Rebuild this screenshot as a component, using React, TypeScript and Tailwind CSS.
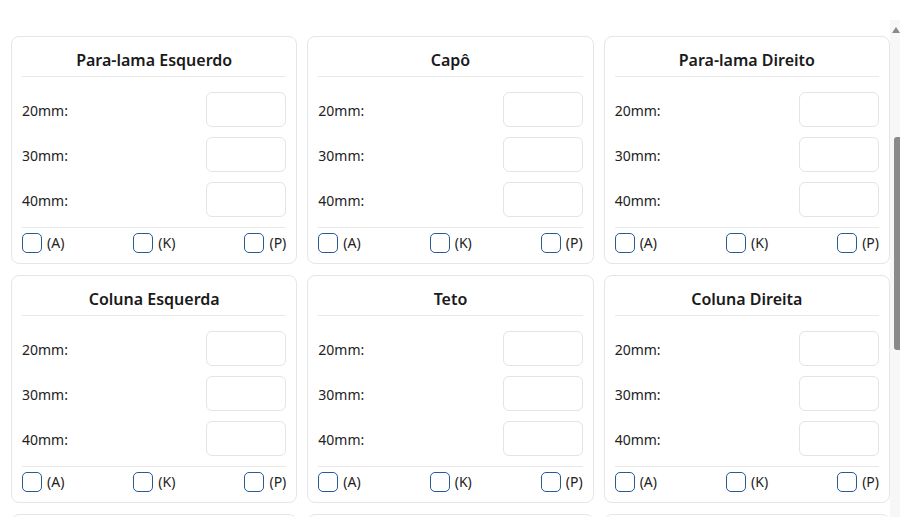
import React from "react";

const titles = [
  "Para-lama Esquerdo",
  "Capô",
  "Para-lama Direito",
  "Coluna Esquerda",
  "Teto",
  "Coluna Direita",
];

function Check({ label }: { label: string }) {
  return (
    <label className="flex items-center gap-[5px] h-[20px]">
      <span className="w-[20px] h-[20px] rounded-[5px] border-[1.5px] border-[#2a5a93] bg-white box-border" />
      <span className="text-[14px] text-[#222] leading-none">{label}</span>
    </label>
  );
}

function Card({ title }: { title: string }) {
  return (
    <div className="border border-[#e6e6e6] rounded-[8px] bg-white p-[10px] flex flex-col">
      <div className="h-[29px] pt-[1px] flex items-start justify-center">
        <span className="text-[16px] font-semibold text-[#1a1a1a] leading-[24px]">{title}</span>
      </div>
      <div className="h-px bg-[#e8e8e8]" />
      <div className="mt-[15px] flex flex-col gap-[10px]">
        {["20mm:", "30mm:", "40mm:"].map((l) => (
          <div key={l} className="h-[35px] flex items-center justify-between">
            <span className="text-[14px] text-[#222] pt-[1px]">{l}</span>
            <div className="w-[80px] h-[35px] rounded-[6px] border border-[#e4e4e4] bg-white" />
          </div>
        ))}
      </div>
      <div className="mt-[10px] h-px bg-[#e8e8e8]" />
      <div className="mt-[5px] flex items-center justify-between">
        <Check label="(A)" />
        <Check label="(K)" />
        <Check label="(P)" />
      </div>
    </div>
  );
}

export default function App() {
  return (
    <div
      className="w-[900px] h-[517px] overflow-hidden bg-white flex"
      style={{ fontFamily: '"Noto Sans", "Open Sans", sans-serif' }}
    >
      <div className="flex-1 pl-[11px] pt-[36px]">
        <div className="grid grid-cols-3 gap-x-[10px] gap-y-[11px]">
          {titles.map((t) => (
            <Card key={t} title={t} />
          ))}
          <div className="h-[228px] border border-[#e6e6e6] rounded-[8px] bg-white" />
          <div className="h-[228px] border border-[#e6e6e6] rounded-[8px] bg-white" />
          <div className="h-[228px] border border-[#e6e6e6] rounded-[8px] bg-white" />
        </div>
      </div>
      <div className="w-[10px] mt-[20px] bg-[#f7f7f7] flex flex-col items-end">
        <svg width="8" height="6" viewBox="0 0 8 6" className="mt-[7px]">
          <polygon points="4,0 8,6 0,6" fill="#8a8a8a" />
        </svg>
        <div className="mt-[104px] w-[6px] h-[213px] rounded-l-[3px] bg-[#8a8a8a]" />
      </div>
    </div>
  );
}
